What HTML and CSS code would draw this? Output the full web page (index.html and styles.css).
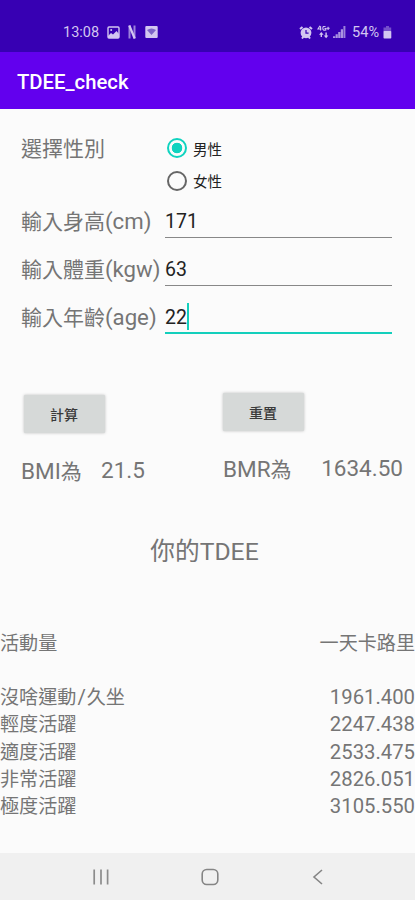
FILE: index.html
```
<!DOCTYPE html>
<html lang="zh-Hant">
<head>
  <meta charset="UTF-8" />
  <meta name="viewport" content="width=device-width, initial-scale=1.0"/>
  <title>TDEE_check</title>
  <link rel="stylesheet" href="styles.css">
</head>
<body>
  <div class="status-bar">
    <div class="status-left">
      <span>13:08</span>
      <svg width="13" height="13" viewBox="0 0 13 13">
        <rect x="1" y="1" width="11" height="11" rx="1" fill="none" stroke="currentColor" stroke-width="1.4"/>
        <path d="M1 10l3-3 2 1.5L9.5 5 12 8v4H1z" fill="currentColor"/>
        <circle cx="4.2" cy="4" r="1" fill="currentColor"/>
      </svg>
      <svg width="8" height="14" viewBox="0 0 8 14">
        <path d="M1.5 0.5v13M6.5 0.5v13" stroke="currentColor" stroke-width="2" opacity="0.65"/>
        <path d="M1.3 0.5l5.4 13" stroke="currentColor" stroke-width="2.2"/>
      </svg>
      <svg width="13" height="12" viewBox="0 0 13 12">
        <rect x="0.3" y="0" width="12.4" height="12" rx="1" fill="currentColor"/>
        <path d="M2 4q4.5-3 9 0L6.5 9z" fill="#7d63c9"/>
      </svg>
    </div>
    <div class="status-right">
      <svg class="alarm" width="14" height="13" viewBox="0 0 14 13">
        <path d="M1 3l2.5-2M13 3l-2.5-2M3 12.5l1.5-2M11 12.5l-1.5-2" stroke="currentColor" stroke-width="2"/>
        <circle cx="7" cy="6.8" r="5.4" fill="currentColor"/>
        <path d="M7 4v3.2h2.6" fill="none" stroke="#3700b3" stroke-width="1.2"/>
      </svg>
      <svg class="lte" width="13" height="14" viewBox="0 0 13 14">
        <path d="M3 0.8L1 4h3.4M3.6 1.2v4.4M8.6 1.8Q5.8 0.6 5.8 3.3T8.8 5V3.6H7.5M9.5 3.3h3.2M11.1 1.7v3.2" fill="none" stroke="currentColor" stroke-width="1.1"/>
        <path d="M2 9.8L4.3 7l2.3 2.8H5V12H3.6V9.8zM6.8 10.5h1.6V7.5h1.4v3h1.6L9.1 13.3z" fill="currentColor"/>
      </svg>
      <svg class="signal" width="13" height="12" viewBox="0 0 13 12">
        <path d="M0 12v-1.7h2.2V12zM2.6 12V8.3h2.2V12zM5.2 12V6h2.2v6zM7.8 12V3.3H10V12z" fill="currentColor" opacity="0.75"/>
        <path d="M10.4 12V0h2v12z" fill="currentColor" opacity="0.65"/>
      </svg>
      <span>54%</span>
      <svg class="battery" width="9" height="13" viewBox="0 0 9 13">
        <path d="M3 0h3v1.5h2.2v4H0.5v-4H3z" fill="currentColor" opacity="0.4"/>
        <rect x="0.5" y="5" width="7.8" height="7.5" rx="0.8" fill="currentColor"/>
      </svg>
    </div>
  </div>

  <header class="app-bar">TDEE_check</header>

  <main class="content">
    <form class="form">
      <div class="gender-row">
        <span class="label">選擇性別</span>
        <div class="radio-group">
          <div class="radio-item"><span class="radio checked"></span>男性</div>
          <div class="radio-item"><span class="radio"></span>女性</div>
        </div>
      </div>
      <div class="input-row">
        <span class="label">輸入身高<span class="latin">(cm)</span></span>
        <div class="input">171</div>
      </div>
      <div class="input-row">
        <span class="label">輸入體重<span class="latin">(kgw)</span></span>
        <div class="input">63</div>
      </div>
      <div class="input-row">
        <span class="label">輸入年齡<span class="latin">(age)</span></span>
        <div class="input focused">22<span class="caret"></span></div>
      </div>
    </form>

    <div class="results">
      <div class="result">
        <button type="button">計算</button>
        <div class="result-text"><span class="result-name">BMI<span class="han">為</span></span><span>21.5</span></div>
      </div>
      <div class="result result-bmr">
        <button type="button">重置</button>
        <div class="result-text"><span class="result-name">BMR<span class="han">為</span></span><span>1634.50</span></div>
      </div>
    </div>

    <h2>你的TDEE</h2>

    <div class="table">
      <div class="table-row table-head"><span>活動量</span><span>一天卡路里</span></div>
      <div class="table-row"><span>沒啥運動<span class="slash">/</span>久坐</span><span class="value">1961.400</span></div>
      <div class="table-row"><span>輕度活躍</span><span class="value">2247.438</span></div>
      <div class="table-row"><span>適度活躍</span><span class="value">2533.475</span></div>
      <div class="table-row"><span>非常活躍</span><span class="value">2826.051</span></div>
      <div class="table-row"><span>極度活躍</span><span class="value">3105.550</span></div>
    </div>
  </main>

  <nav class="nav-bar">
    <svg width="18" height="18" viewBox="0 0 18 18">
      <path d="M2.2 1.5v15M9 1.5v15M15.6 1.5v15" stroke="#8c8c8c" stroke-width="1.7"/>
    </svg>
    <svg width="18" height="18" viewBox="0 0 18 18">
      <rect x="1.2" y="1.5" width="15.6" height="15" rx="4.5" fill="none" stroke="#858585" stroke-width="1.6"/>
    </svg>
    <svg width="18" height="18" viewBox="0 0 18 18">
      <path d="M13 2L5 9l8 7" fill="none" stroke="#858585" stroke-width="1.6"/>
    </svg>
  </nav>
</body>
</html>
```

FILE: styles.css
```
* {
  margin: 0;
  padding: 0;
  box-sizing: border-box;
}

body {
  display: flex;
  flex-direction: column;
  height: 900px;
  background: #fbfbfb;
  color: #757575;
  font-family: Roboto, "Noto Sans CJK TC", sans-serif;
  font-weight: 400;
  overflow: hidden;
}

.status-bar {
  display: flex;
  justify-content: space-between;
  height: 52px;
  padding: 12px 23px 0 63px;
  background: #3700b3;
  color: #d3c6f1;
  font-size: 14.5px;
}

.status-left,
.status-right {
  display: flex;
  align-items: center;
}

.status-left {
  gap: 8px;
}

.status-left svg:last-child {
  margin-left: 1px;
}

.alarm {
  margin-right: 4px;
}

.lte {
  margin-right: 3px;
}

.signal {
  margin-right: 6px;
}

.battery {
  margin-left: 4px;
}

.app-bar {
  display: flex;
  align-items: center;
  height: 56.5px;
  padding: 3px 17px 0;
  background: #6200ee;
  color: #fff;
  font-size: 20.3px;
  font-weight: 500;
}

.content {
  flex: 1;
}

.form {
  padding: 23.5px 23px 0 21px;
}

.label {
  width: 144px;
  padding-top: 1px;
  font-size: 21px;
  line-height: 32px;
  white-space: nowrap;
}

.latin {
  font-size: 22.2px;
}

.gender-row {
  display: flex;
  height: 65px;
}

.radio-item {
  display: flex;
  align-items: center;
  gap: 6px;
  height: 32.5px;
  padding-left: 2px;
  color: #222;
  font-size: 14.5px;
}

.radio {
  width: 20px;
  height: 20px;
  border: 2px solid #666;
  border-radius: 50%;
}

.radio.checked {
  border-color: #0fd3bf;
  background: radial-gradient(circle, #0fd3bf 5px, transparent 5.6px);
}

.input-row {
  display: flex;
  height: 48px;
  padding-top: 7px;
}

.input {
  display: flex;
  align-items: center;
  flex: 1;
  height: 34px;
  padding-top: 2px;
  border-bottom: 1px solid #888;
  color: #222;
  font-size: 19.5px;
}

.input.focused {
  border-bottom: 2px solid #13cfbc;
}

.caret {
  width: 2px;
  height: 27px;
  margin-top: -2px;
  background: #13cfbc;
}

.results {
  display: flex;
  padding: 54px 12px 0 21px;
}

.result {
  width: 201px;
}

.result-bmr {
  flex: 1;
  width: auto;
  margin-top: -2px;
}

button {
  display: block;
  width: 81px;
  height: 38px;
  margin: 0 0 0 2.5px;
  border: none;
  border-radius: 1px;
  background: #d6d9d8;
  box-shadow: 0 0 3px rgba(0, 0, 0, 0.25);
  color: #3a3a3a;
  font-family: inherit;
  font-size: 14px;
  font-weight: 500;
}

.result-bmr button {
  margin-left: 0.5px;
}

.result-text {
  display: flex;
  align-items: center;
  height: 32px;
  margin-top: 21px;
  font-size: 22.5px;
}

.result-name {
  width: 80px;
}

.han {
  font-size: 21px;
}

.result-bmr .result-text {
  justify-content: space-between;
  padding-left: 1px;
}

h2 {
  margin-top: 48px;
  padding-right: 6px;
  font-size: 24.7px;
  font-weight: 400;
  line-height: 36px;
  text-align: center;
}

.table {
  margin-top: 58px;
}

.table-row {
  display: flex;
  align-items: center;
  justify-content: space-between;
  height: 27.3px;
  font-size: 19.1px;
}

.table-head {
  margin-bottom: 27px;
}

.slash {
  padding: 0 1px;
  font-size: 20.3px;
}

.value {
  padding-top: 2px;
  font-size: 20.3px;
}

.nav-bar {
  display: flex;
  justify-content: space-between;
  align-items: center;
  height: 47px;
  padding: 0 88px 0 92px;
  background: #f0f0f0;
}
```
